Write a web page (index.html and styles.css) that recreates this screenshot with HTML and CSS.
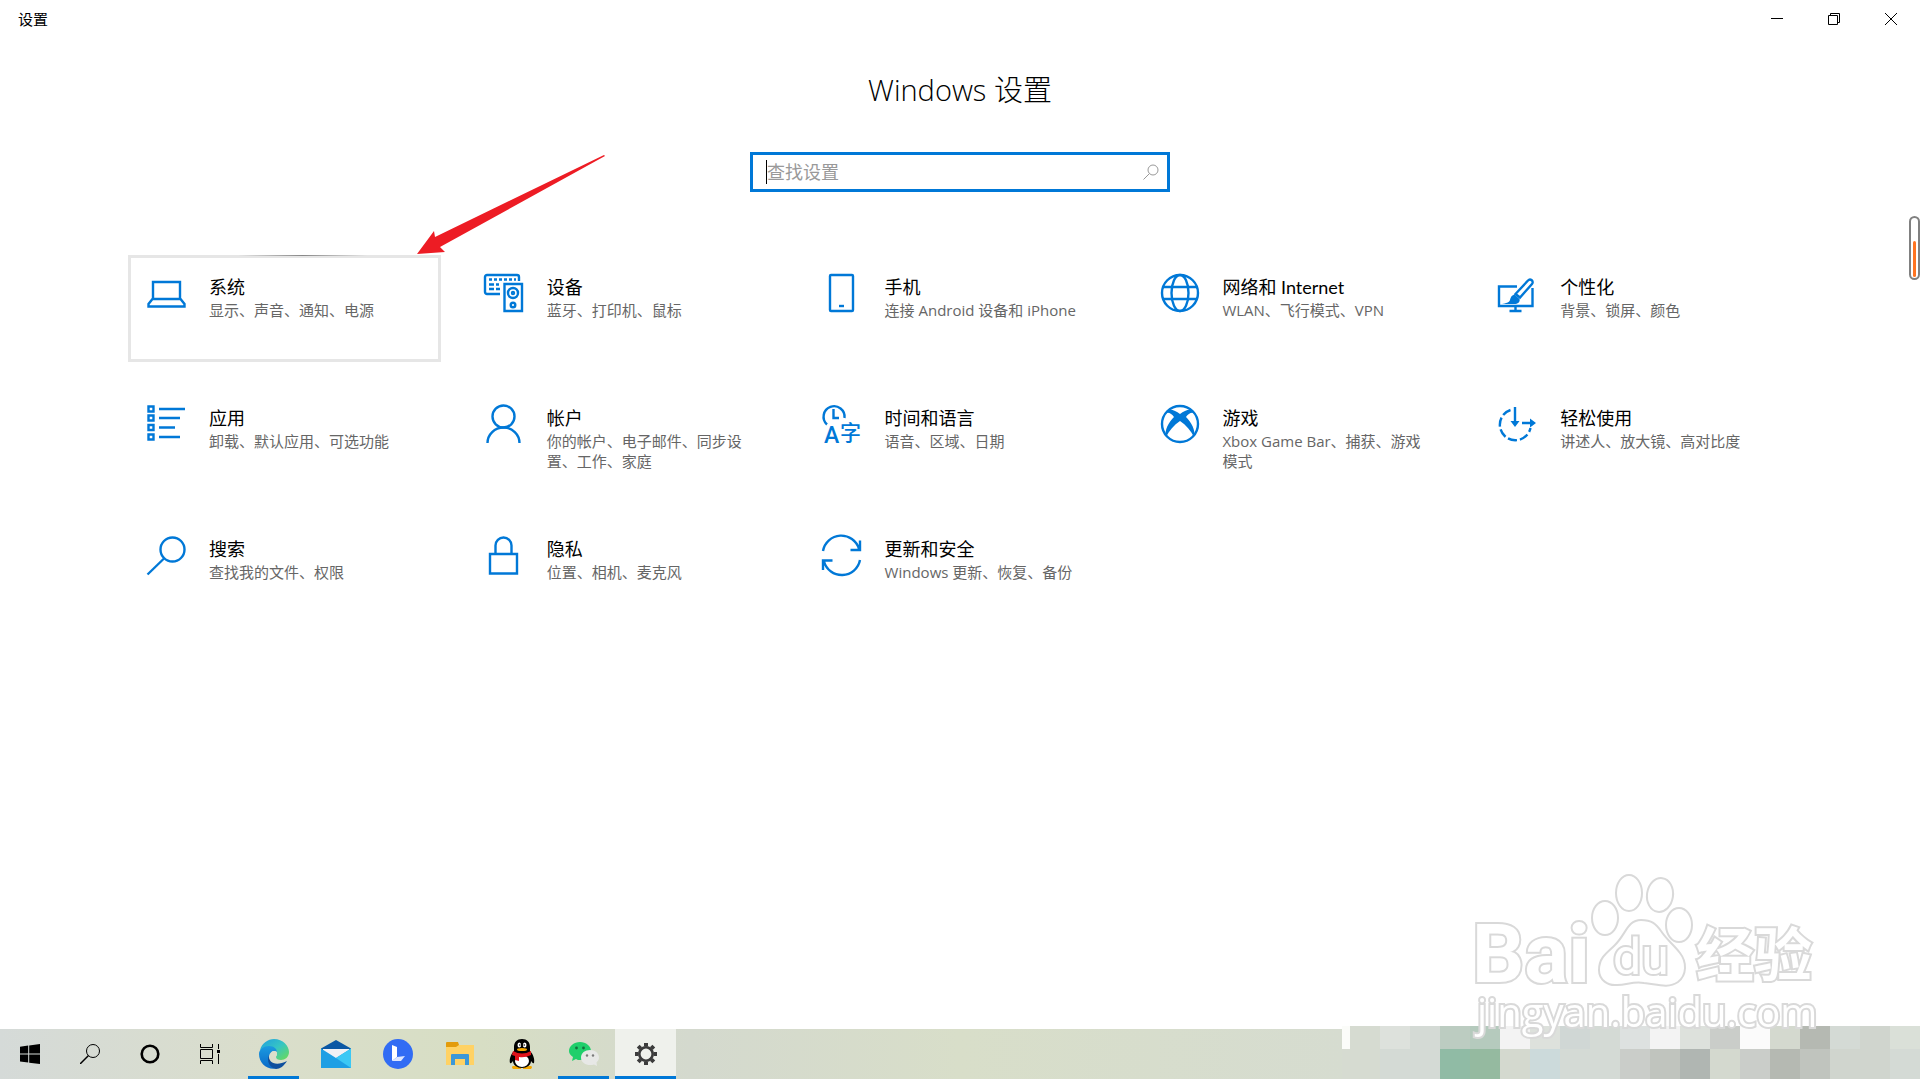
FILE: index.html
```
<!DOCTYPE html>
<html lang="zh-CN">
<head>
    <meta charset="UTF-8">
    <meta name="viewport" content="width=device-width, initial-scale=1.0">
    <title>设置</title>
    <link rel="stylesheet" href="styles.css">
</head>
<body>
    <header class="titlebar">
        <span class="titlebar-name">设置</span>
        <div class="window-buttons">
            <button type="button" aria-label="最小化"><svg width="12" height="12" viewBox="0 0 12 12"><path d="M0 5.500h12"/></svg></button>
            <button type="button" aria-label="还原"><svg width="12" height="12" viewBox="0 0 12 12"><path d="M.5 2.500h9v9h-9zM2.500 2.500v-2h9v9h-2"/></svg></button>
            <button type="button" aria-label="关闭"><svg width="12" height="12" viewBox="0 0 12 12"><path d="M0 0l12 12M12 0L0 12"/></svg></button>
        </div>
    </header>

    <main class="settings">
        <h1>Windows 设置</h1>
        <form class="search">
            <input type="text" id="query" placeholder="查找设置" aria-label="查找设置">
            <button type="submit" aria-label="搜索"><svg width="16" height="16" viewBox="0 0 16 16"><circle cx="10" cy="6" r="5"/><path d="M6.500 9.500L.5 15.500"/></svg></button>
        </form>

        <nav class="categories">
            <a href="#system" class="card active">
                <svg class="icon" viewBox="0 0 40 40"><path d="M7 26V9h27v17M6.500 26h28l4 5v2.500h-36V31z"/></svg>
                <div><h2>系统</h2><p>显示、声音、通知、电源</p></div>
            </a>
            <a href="#devices" class="card">
                <svg class="icon" viewBox="0 0 40 40"><path d="M16 21H3a2 2 0 0 1-2-2V4a2 2 0 0 1 2-2h30a2 2 0 0 1 2 2v4"/><path d="M5 6.500h27" stroke-dasharray="3 2"/><path d="M5 11.500h5M12 11.500h3M5 16h5M12 16h4"/><path d="M20.500 11h17.500v27h-17.500z"/><circle cx="29" cy="20" r="5"/><circle cx="29" cy="20" r="1" /><circle cx="29" cy="32" r="2.300"/></svg>
                <div><h2>设备</h2><p>蓝牙、打印机、鼠标</p></div>
            </a>
            <a href="#phone" class="card">
                <svg class="icon" viewBox="0 0 40 40"><rect x="8" y="2" width="23" height="36" rx="1"/><path d="M17 33h5"/></svg>
                <div><h2>手机</h2><p>连接 Android 设备和 iPhone</p></div>
            </a>
            <a href="#network" class="card">
                <svg class="icon" viewBox="0 0 40 40"><circle cx="21" cy="20" r="18"/><ellipse cx="21" cy="20" rx="8.500" ry="18"/><path d="M4 14h34M4 26h34"/></svg>
                <div><h2>网络和 Internet</h2><p>WLAN、飞行模式、VPN</p></div>
            </a>
            <a href="#personal" class="card">
                <svg class="icon" viewBox="0 0 40 40"><path d="M20 13.500H2v19.500h33.500V15M18.500 33v5M12.500 38h12"/><path d="M18.500 21L31 7.500a2.500 2.500 0 0 1 4 3.500L23 24.500z"/><path class="solid" d="M17.500 21.500l5 4.500c1 3-2 5-5 5H5c4-1 7-1 8-4 .5-3 2-5 4.500-5.500z"/></svg>
                <div><h2>个性化</h2><p>背景、锁屏、颜色</p></div>
            </a>
            <a href="#apps" class="card">
                <svg class="icon" viewBox="0 0 40 40"><path d="M2.500 2.500h5v5h-5zM2.500 11.500h5v5h-5zM2.500 21h5v5h-5zM2.500 30.500h5v5h-5zM13 5h26M13 14h21M13 23.500h16M13 33h21"/></svg>
                <div><h2>应用</h2><p>卸载、默认应用、可选功能</p></div>
            </a>
            <a href="#accounts" class="card">
                <svg class="icon" viewBox="0 0 40 40"><circle cx="19.500" cy="12.500" r="11"/><path d="M3.500 39a16 15.500 0 0 1 32 0"/></svg>
                <div><h2>帐户</h2><p>你的帐户、电子邮件、同步设置、工作、家庭</p></div>
            </a>
            <a href="#time" class="card">
                <svg class="icon" viewBox="0 0 40 40"><path d="M5 20.500a10.500 10.500 0 1 1 17.500-6.500M11.500 5v9H17"/><text x="2" y="39" font-size="23">A</text><text x="18" y="36" font-size="21">字</text></svg>
                <div><h2>时间和语言</h2><p>语音、区域、日期</p></div>
            </a>
            <a href="#gaming" class="card">
                <svg class="icon" viewBox="0 0 40 40"><circle cx="21" cy="20" r="18"/><path class="solid" d="M9 6c4-1 8 1 12 4 4-3 8-5 12-4l2 3c-3-1-6 1-8 4 5 5 10 13 8 20-3-6-8-12-14-16-6 4-11 10-14 16-2-7 3-15 8-20-2-3-5-5-8-4z"/></svg>
                <div><h2>游戏</h2><p>Xbox Game Bar、捕获、游戏模式</p></div>
            </a>
            <a href="#ease" class="card">
                <svg class="icon" viewBox="0 0 40 40"><path d="M13.500 6A15.500 15.500 0 1 0 33.500 24" stroke-dasharray="9 3"/><path d="M18 3v17M25 19h9"/><path class="solid" d="M13.500 17h9L18 23zM33 14.500v9l6-4.500z"/></svg>
                <div><h2>轻松使用</h2><p>讲述人、放大镜、高对比度</p></div>
            </a>
            <a href="#search" class="card">
                <svg class="icon" viewBox="0 0 40 40"><circle cx="26.500" cy="14.500" r="12"/><path d="M18 23.500L1.500 39.500"/></svg>
                <div><h2>搜索</h2><p>查找我的文件、权限</p></div>
            </a>
            <a href="#privacy" class="card">
                <svg class="icon" viewBox="0 0 40 40"><path d="M6 19h27v19.500H6zM11.500 19v-8.500a8 8 0 0 1 16 0V19"/></svg>
                <div><h2>隐私</h2><p>位置、相机、麦克风</p></div>
            </a>
            <a href="#update" class="card">
                <svg class="icon" viewBox="0 0 40 40"><path d="M1 16a18.500 18.500 0 0 1 36-2M38 5.500v9.500h-9.500M38 25a18.500 18.500 0 0 1-36 1.500M1 35v-9.500h9.500"/></svg>
                <div><h2>更新和安全</h2><p>Windows 更新、恢复、备份</p></div>
            </a>
        </nav>
    </main>

    <!-- red pointer to the first card -->
    <svg class="arrow" width="190" height="102" viewBox="0 0 190 102"><path d="M1 100L18 77l1 6L188 1l1 1L24 93l5 5z"/></svg>

    <div class="gauge"><span></span></div>

    <footer class="taskbar">
        <div class="system-buttons">
            <button type="button" aria-label="开始"><svg width="20" height="20" viewBox="0 0 20 20"><path d="M0 2.800l8.200-1.200v8H0zM9.200 1.400L20 0v9.600H9.200zM0 10.600h8.200v8L0 17.400zM9.200 10.600H20V20L9.200 18.700z"/></svg></button>
            <button type="button" aria-label="搜索"><svg width="20" height="20" viewBox="0 0 20 20" fill="none" stroke="#000"><circle cx="13" cy="7" r="6.500"/><path d="M8.500 11.500L0 20" stroke-width="1.500"/></svg></button>
            <button type="button" aria-label="Cortana"><svg width="20" height="20" viewBox="0 0 20 20" fill="none" stroke="#000" stroke-width="2.600"><circle cx="10" cy="10" r="8.300"/></svg></button>
            <button type="button" aria-label="任务视图"><svg width="20" height="20" viewBox="0 0 20 20" fill="none" stroke="#000"><path d="M.5 0v3.500h12V0M.5 5.500h12v9H.5zM.5 20v-3.500h12V20M18.500 0v5M18.500 10v10"/><path d="M17 6h3v3h-3z" fill="#000" stroke="none"/></svg></button>
        </div>
        <div class="apps">
            <button type="button" class="running" aria-label="Edge">
                <svg width="30" height="30" viewBox="0 0 30 30">
                    <defs>
                        <linearGradient id="edge-top" x1="0" y1="0" x2="1" y2="1"><stop offset="0" stop-color="#1f9fe0"/><stop offset=".5" stop-color="#36c5c4"/><stop offset="1" stop-color="#6fdc50"/></linearGradient>
                        <linearGradient id="edge-body" x1="0" y1="0" x2="0" y2="1"><stop offset="0" stop-color="#1b9be0"/><stop offset="1" stop-color="#0a68c8"/></linearGradient>
                    </defs>
                    <path d="M1 11C3 4 9 0 15 0c9 0 15 7 15 13 0 5-4 8-8 8-3 0-5-1-5-3 0-1 1-2 1-4 0-3-3-5-6-5-5 0-9 1-11 2z" fill="url(#edge-top)"/>
                    <path d="M0 15c0-5 5-8 10-8 5 0 8 3 8 6-2-2-7-1-8 4-1 6 3 11 9 12C9 32 0 25 0 15z" fill="url(#edge-body)"/>
                    <path d="M10 16c-1 7 6 12 18 6-3 5-7 8-11 8C11 29 7 22 10 16z" fill="#0f4f9e"/>
                    <circle cx="15" cy="15" r="3" fill="#dcdfcb"/>
                </svg>
            </button>
            <button type="button" aria-label="邮件">
                <svg width="30" height="30" viewBox="0 0 30 30"><path d="M0 9.500L15 1l15 8.500V13H0z" fill="#0b57a4"/><path d="M2 10h26v10H2z" fill="#f1f1f5"/><path d="M0 9.500L15 19l15-9.500V29H0z" fill="#1e9fe4"/><path d="M30 9.500V29L15 19z" fill="#3bc8f5"/></svg>
            </button>
            <button type="button" aria-label="联想">
                <svg width="30" height="30" viewBox="0 0 30 30"><circle cx="15" cy="15" r="15" fill="#316cf4"/><path d="M9 6l5 2v10l-5 4z" fill="#fff"/><path d="M14 18l8-1-4 5H9z" fill="#dce6ff"/></svg>
            </button>
            <button type="button" aria-label="文件资源管理器">
                <svg width="28" height="24" viewBox="0 0 28 24"><path d="M0 1h11l2 2h15v20H0z" fill="#ffd264"/><path d="M0 1q0-1 1-1h11l1 3-3 2H0z" fill="#e39b0b"/><path d="M5 23V13q0-1 1-1h16q1 0 1 1v10h-4v-6H9v6z" fill="#3c98d8"/></svg>
            </button>
            <button type="button" aria-label="QQ">
                <svg width="26" height="30" viewBox="0 0 26 30"><path d="M4 27h8v3H4q-2-2 0-3zM14 27h8q2 1 0 3h-8z" fill="#f5a800"/><path d="M13 0c5 0 8 3 8 8v4c3 3 5 8 4 12-1 1-2-1-3-2 0 4-4 7-9 7s-9-3-9-7c-1 1-2 3-3 2-1-4 1-9 4-12V8c0-5 3-8 8-8z" fill="#000"/><ellipse cx="13" cy="22" rx="7" ry="6" fill="#fff"/><ellipse cx="10.300" cy="6" rx="1.800" ry="2.500" fill="#fff"/><ellipse cx="15.700" cy="6" rx="1.800" ry="2.500" fill="#fff"/><circle cx="10.800" cy="6" r=".8"/><circle cx="15.200" cy="6" r=".8"/><ellipse cx="13" cy="10.500" rx="5" ry="1.500" fill="#f5a800"/><path d="M4 12q9 5 18 0v4q-6 3-12 2v4l-4-1v-4l-3-1z" fill="#e0131a"/></svg>
            </button>
            <button type="button" class="running" aria-label="微信">
                <svg width="30" height="24" viewBox="0 0 30 24"><path d="M11 0c6 0 11 4 11 9 0 6-5 9-11 9-1 0-3 0-4-1l-4 2 1-4C1 13 0 11 0 9c0-5 5-9 11-9z" fill="#1fcf6b"/><circle cx="7.500" cy="6" r="1.400" fill="#14703d"/><circle cx="14.500" cy="6" r="1.400" fill="#14703d"/><path d="M21 8c5 0 9 3 9 7.500 0 2-1 3.500-2.500 5L28 24l-3-1.500c-6 2-13-1-13-7C12 11 16 8 21 8z" fill="#e7e8e6"/><circle cx="18" cy="13.500" r="1.200" fill="#7a7a7a"/><circle cx="24" cy="13.500" r="1.200" fill="#7a7a7a"/></svg>
            </button>
            <button type="button" class="running current" aria-label="设置">
                <svg width="22" height="22" viewBox="0 0 22 22" fill="none" stroke="#3c3c3c"><circle cx="11" cy="11" r="6.700" stroke-width="2.600"/><g stroke-width="4"><path d="M11 0v3.500M11 18.500V22M0 11h3.500M18.500 11H22M3.200 3.200l2.500 2.500M16.300 16.300l2.500 2.500M3.200 18.800l2.500-2.500M16.300 5.700l2.500-2.500"/></g></svg>
            </button>
        </div>
        <svg class="tray" width="578" height="53" viewBox="0 0 578 53" shape-rendering="crispEdges">
            <path fill="#d4dad5" d="M0 0h578v53H0z"/>
            <path fill="#fbfcf9" d="M0 0h8v23H0z"/>
            <path fill="#d6dbd1" d="M8 0h30v23H8zM0 23h38v30H0z"/>
            <path fill="#dde1dc" d="M38 0h30v23H38zM188 0h30v23h-30zM338 0h30v23h-30z"/>
            <path fill="#bcccc1" d="M98 0h30v23H98z"/>
            <path fill="#b5cabd" d="M128 0h30v23h-30z"/>
            <path fill="#f3f3f3" d="M158 0h30v23h-30zM308 0h30v23h-30z"/>
            <path fill="#d0d7d5" d="M218 0h30v23h-30z"/>
            <path fill="#dde1e0" d="M278 0h30v23h-30z"/>
            <path fill="#cacdc9" d="M368 0h30v23h-30zM278 23h30v30h-30zM398 23h30v30h-30z"/>
            <path fill="#fbfbfb" d="M398 0h30v23h-30z"/>
            <path fill="#d4d9cf" d="M428 0h30v23h-30zM158 23h30v30h-30zM368 23h30v30h-30z"/>
            <path fill="#b5b9b2" d="M458 0h30v23h-30zM428 23h30v30h-30z"/>
            <path fill="#d0d5ce" d="M518 0h30v23h-30zM488 23h60v30h-60z"/>
            <path fill="#dae0d8" d="M548 0h30v23h-30z"/>
            <path fill="#90bba5" d="M98 23h30v30H98z"/>
            <path fill="#95baa0" d="M128 23h30v30h-30z"/>
            <path fill="#ccdadb" d="M188 23h30v30h-30z"/>
            <path fill="#c0c4be" d="M308 23h30v30h-30zM458 23h30v30h-30z"/>
            <path fill="#b0b6b2" d="M338 23h30v30h-30z"/>
        </svg>
    </footer>

    <svg class="watermark" width="360" height="180" viewBox="0 0 360 180">
        <g class="paw">
            <ellipse cx="145" cy="49" rx="13" ry="17"/>
            <ellipse cx="169" cy="24" rx="13" ry="18"/>
            <ellipse cx="200" cy="26" rx="13" ry="17" transform="rotate(8 200 26)"/>
            <ellipse cx="219" cy="56" rx="13" ry="17"/>
            <path d="M181 51c-14 0-15 15-27 26-9 8-15 13-15 24 0 10 9 16 18 15 10 0 16-4 27-2 12 1 24 6 34-1 9-7 9-20 2-29-6-8-13-13-19-22-5-7-9-11-20-11z"/>
        </g>
        <text class="mark-bai" x="12" y="113">Bai</text>
        <text class="mark-du" x="153" y="105">du</text>
        <text class="mark-cn" x="236" y="107">经验</text>
        <text class="mark-url" x="17" y="158">jingyan.baidu.com</text>
    </svg>
</body>
</html>
```
FILE: styles.css
```
* {
    box-sizing: border-box;
}
body {
    font-family: "Open Sans", "Noto Sans CJK SC", sans-serif;
    margin: 0;
    min-height: 100vh;
    display: flex;
    flex-direction: column;
    position: relative;
    overflow-x: hidden;
    background-color: #fff;
    color: #000;
}
button {
    display: flex;
    align-items: center;
    justify-content: center;
    padding: 0;
    border: none;
    background: none;
}
.titlebar {
    display: flex;
    align-items: center;
    justify-content: space-between;
    height: 38px;
    padding: 0 1px 0 18px;
    font-size: 15px;
    line-height: 20px;
}
.window-buttons {
    display: flex;
}
.window-buttons button {
    width: 57px;
    height: 38px;
}
.window-buttons svg {
    fill: none;
    stroke: #000;
}
.settings {
    flex: 1;
    display: flex;
    flex-direction: column;
    align-items: center;
    padding: 30px 128px;
}
h1 {
    margin: 0 0 40px;
    font-size: 29px;
    font-weight: 300;
    line-height: 44px;
}
.search {
    display: flex;
    align-items: center;
    width: 420px;
    height: 40px;
    padding: 0 8px 0 13px;
    border: 3px solid #0078d7;
}
.search::before {
    content: "";
    width: 1px;
    height: 24px;
    background: #000;
}
.search input {
    flex: 1;
    padding: 0;
    border: none;
    outline: none;
    font: 18px "Open Sans", "Noto Sans CJK SC", sans-serif;
}
.search input::placeholder {
    color: #999;
}
.search svg {
    fill: none;
    stroke: #999;
}
.categories {
    align-self: stretch;
    display: grid;
    grid-template-columns: repeat(5, 1fr);
    gap: 24px 25px;
    margin-top: 63px;
}
.card {
    position: relative;
    display: flex;
    gap: 23px;
    min-height: 107px;
    padding: 15px;
    border: 3px solid transparent;
    color: #000;
    text-decoration: none;
}
.card.active {
    border-color: #e6e6e6;
}
.card.active::before {
    content: "";
    position: absolute;
    top: -3px;
    left: 35%;
    width: 42%;
    height: 1px;
    background: linear-gradient(to right, #e6e6e6, #888, #e6e6e6);
}
.icon {
    flex: none;
    width: 40px;
    height: 40px;
    overflow: visible;
    fill: none;
    stroke: #0078d7;
    stroke-width: 2.4;
}
.icon .solid, .icon text {
    fill: #0078d7;
    stroke: none;
}
.icon text {
    font-family: Roboto, "Noto Sans CJK SC", sans-serif;
    font-weight: 500;
}
.card h2 {
    margin: 2px 0 1px;
    font-family: Lato, "Noto Sans CJK SC", sans-serif;
    font-size: 18px;
    font-weight: 400;
    line-height: 24px;
}
.card p {
    margin: 0;
    max-width: 206px;
    color: #666;
    font-size: 15px;
    line-height: 20px;
}
.arrow {
    position: absolute;
    left: 416px;
    top: 154px;
    fill: #ed1c24;
}
.gauge {
    position: absolute;
    right: 0;
    top: 216px;
    width: 11px;
    height: 64px;
    display: flex;
    align-items: flex-end;
    justify-content: center;
    padding-bottom: 1px;
    border: 2px solid #808080;
    border-radius: 6px;
}
.gauge span {
    width: 3px;
    height: 36px;
    border-radius: 2px;
    background: #ff7421;
}
.taskbar {
    display: flex;
    align-items: flex-end;
    height: 50px;
    background: linear-gradient(to right, #d5dad8, #dadecb 14%, #d7dec4 25%, #d4d9ce 36%, #d8dec9 50%, #d6dcd0 70%);
}
.system-buttons {
    display: flex;
}
.system-buttons button {
    width: 60px;
    height: 50px;
}
.apps {
    display: flex;
    gap: 1px;
    margin-left: 3px;
}
.apps button {
    position: relative;
    width: 61px;
    height: 50px;
}
.apps .running::after {
    content: "";
    position: absolute;
    left: 5px;
    right: 5px;
    bottom: 0;
    height: 3px;
    background: #0078d7;
}
.apps .current {
    background: #eff1ec;
}
.apps .current::after {
    left: 0;
    right: 0;
}
.tray {
    margin-left: auto;
}
.watermark {
    position: absolute;
    right: 100px;
    bottom: 30px;
    fill: #fff;
    stroke: #d9d9d9;
    stroke-width: 2;
    filter: blur(0.6px);
}
.watermark text {
    paint-order: stroke;
    stroke-width: 4;
}
.mark-bai {
    font: bold 82px Roboto, sans-serif;
}
.mark-du {
    font: 50px Roboto, sans-serif;
}
.mark-cn {
    font: bold 58px "Noto Sans CJK SC", sans-serif;
}
.mark-url {
    font: 40px "Open Sans", sans-serif;
}
```
